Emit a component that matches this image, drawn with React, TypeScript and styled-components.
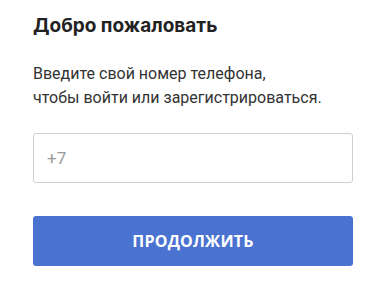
import styled, { createGlobalStyle } from "styled-components";

const GlobalStyle = createGlobalStyle`
  html, body {
    margin: 0;
    padding: 0;
    background: #ffffff;
  }
`;

const Page = styled.div`
  width: 392px;
  height: 288px;
  box-sizing: border-box;
  padding: 14px 39px 0 33px;
  display: flex;
  flex-direction: column;
`;

const Title = styled.h1`
  margin: 0;
  font-family: "Inter", "Open Sans", sans-serif;
  font-weight: 700;
  font-size: 19px;
  line-height: 24px;
  color: #222222;
`;

const Lead = styled.p`
  margin: 24px 0 0;
  font-family: Roboto, "Liberation Sans", sans-serif;
  font-size: 16px;
  line-height: 24px;
  color: #333333;
`;

const PhoneInput = styled.input`
  margin-top: 23px;
  box-sizing: border-box;
  width: 320px;
  height: 50px;
  padding: 0 13px;
  border: 1px solid #cfcfcf;
  border-radius: 3px;
  font-family: Roboto, "Liberation Sans", sans-serif;
  font-size: 17px;
  color: #333333;
  outline: none;

  &::placeholder {
    color: #9a9a9a;
  }
`;

const SubmitButton = styled.button`
  margin-top: 33px;
  width: 320px;
  height: 50px;
  border: none;
  border-radius: 3px;
  background: #4a72d0;
  color: #ffffff;
  font-family: "Open Sans", Roboto, sans-serif;
  font-weight: 700;
  font-size: 16px;
  letter-spacing: 0.2px;
  cursor: pointer;
`;

export default function App() {
  return (
    <>
      <GlobalStyle />
      <Page>
        <Title>Добро пожаловать</Title>
        <Lead>
          Введите свой номер телефона,
          <br />
          чтобы войти или зарегистрироваться.
        </Lead>
        <PhoneInput type="tel" placeholder="+7" />
        <SubmitButton>ПРОДОЛЖИТЬ</SubmitButton>
      </Page>
    </>
  );
}
